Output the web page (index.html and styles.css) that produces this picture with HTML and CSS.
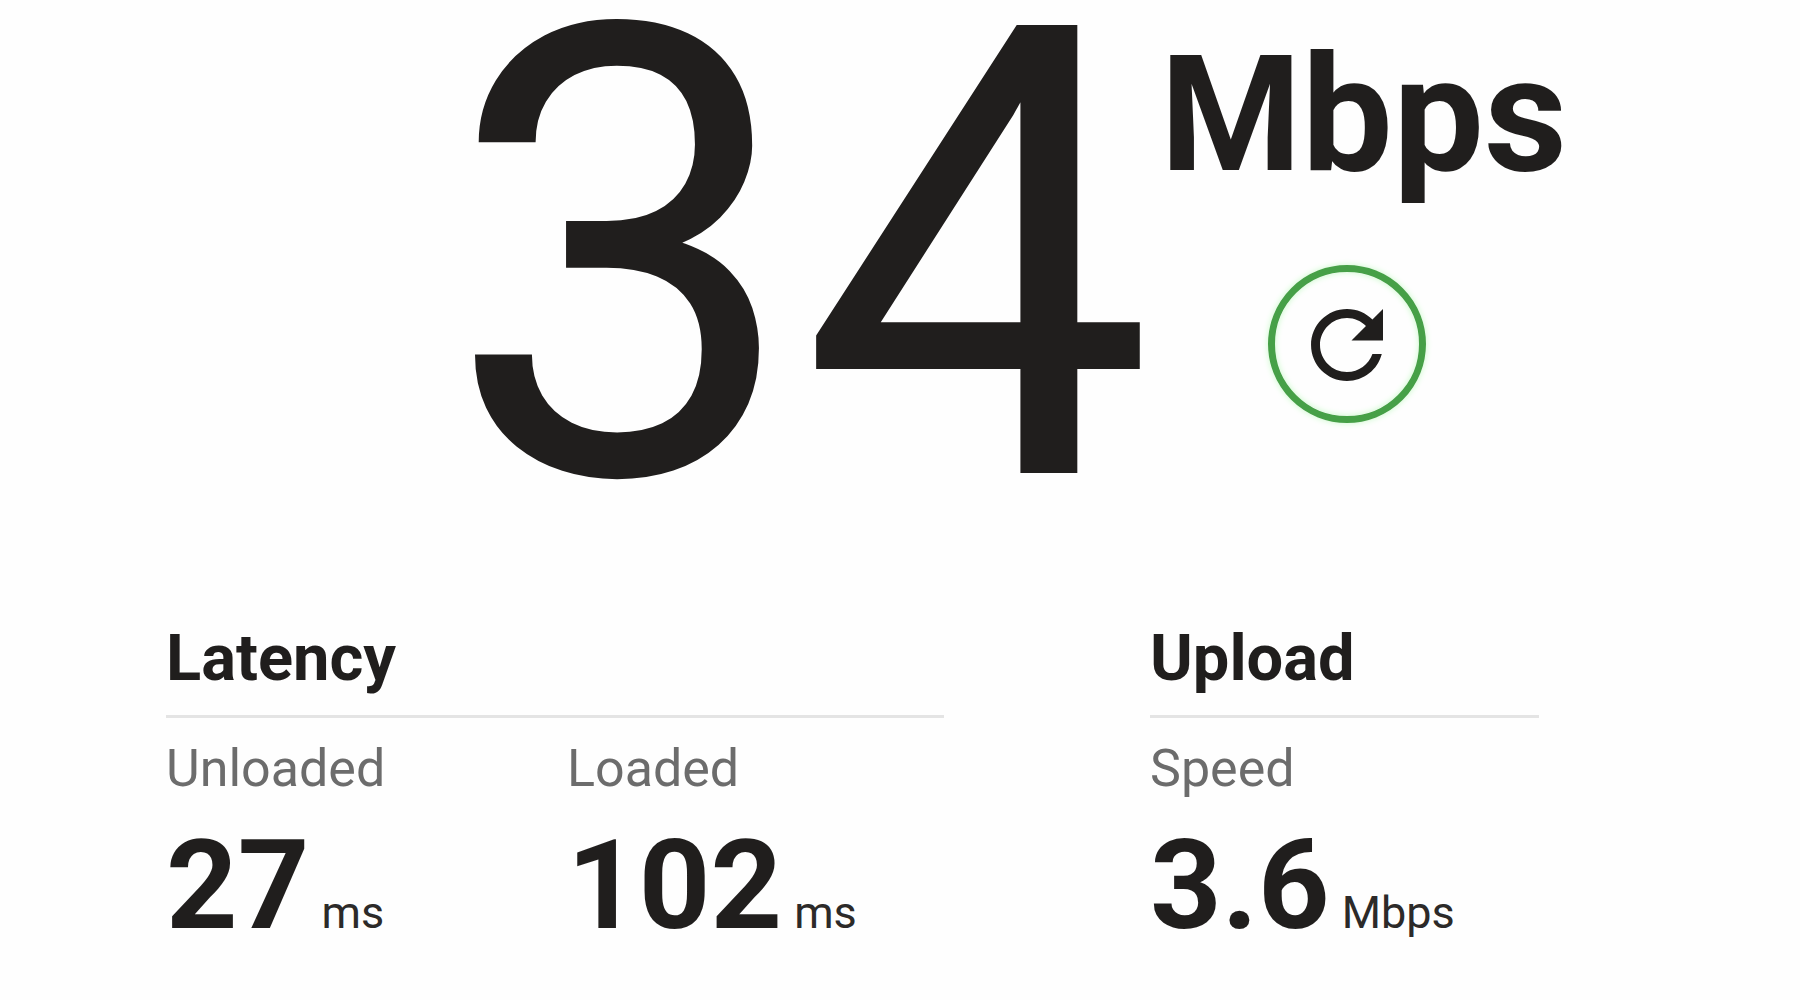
FILE: index.html
```html
<!DOCTYPE html>
<html lang="en">
<head>
    <meta charset="UTF-8">
    <meta name="viewport" content="width=device-width, initial-scale=1.0">
    <title>Internet speed test</title>
    <link rel="stylesheet" href="styles.css">
</head>

<body>
    <main class="speed-container">
        <!-- download speed -->
        <section class="speed-result">
            <div class="speed-value">34</div>
            <div class="speed-side">
                <div class="speed-units">Mbps</div>
                <button type="button" class="btn-refresh" aria-label="Test again">
                    <svg class="refresh-icon" viewBox="0 0 24 24" aria-hidden="true">
                        <path d="M17.65 6.35C16.2 4.9 14.21 4 12 4c-4.42 0-7.99 3.58-7.99 8s3.57 8 7.99 8c3.73 0 6.84-2.55 7.73-6h-2.08c-.82 2.33-3.04 4-5.65 4-3.31 0-6-2.69-6-6s2.69-6 6-6c1.66 0 3.14.69 4.22 1.78L13 11h7V4l-2.35 2.35z"/>
                    </svg>
                </button>
            </div>
        </section>

        <!-- latency and upload -->
        <div class="details">
            <section class="detail-group">
                <h2 class="detail-title">Latency</h2>
                <div class="detail-row">
                    <div class="detail-item">
                        <div class="detail-label">Unloaded</div>
                        <div class="detail-value">27 <span class="detail-units">ms</span></div>
                    </div>
                    <div class="detail-item">
                        <div class="detail-label">Loaded</div>
                        <div class="detail-value">102 <span class="detail-units">ms</span></div>
                    </div>
                </div>
            </section>
            <section class="detail-group">
                <h2 class="detail-title">Upload</h2>
                <div class="detail-item">
                    <div class="detail-label">Speed</div>
                    <div class="detail-value">3.6 <span class="detail-units">Mbps</span></div>
                </div>
            </section>
        </div>
    </main>
</body>
</html>
```
FILE: styles.css
```css
body {
    margin: 0;
    background-color: #fefefe;
    color: #201e1d;
    font-family: Roboto, "Liberation Sans", sans-serif;
}

/* download speed */
.speed-result {
    display: flex;
    justify-content: center;
    gap: 6px;
    padding-left: 213px;
}
.speed-value {
    font-size: 630px;
    line-height: 517px;
}
.speed-side {
    padding-top: 20px;
}
.speed-units {
    font-size: 162px;
    line-height: 191px;
    font-weight: bold;
}
.btn-refresh {
    display: flex;
    align-items: center;
    justify-content: center;
    width: 158px;
    height: 158px;
    margin: 54px 0 0 108px;
    padding: 0;
    border: 7px solid #46a047;
    border-radius: 50%;
    background: none;
    box-shadow: 0 0 6px #c8fac8, inset 0 0 6px #c8fac8;
    color: inherit;
    cursor: pointer;
}
.refresh-icon {
    flex: none;
    width: 108px;
    height: 108px;
    padding-top: 2px;
    fill: currentColor;
}

/* latency and upload */
.details {
    display: grid;
    grid-template-columns: 2fr 1fr;
    column-gap: 206px;
    padding: 103px 261px 40px 166px;
}
.detail-title {
    margin: 0 0 20px;
    padding-bottom: 18px;
    border-bottom: 3px solid #e4e4e4;
    font-size: 65px;
    line-height: 77px;
}
.detail-row {
    display: grid;
    grid-template-columns: 1fr 1fr;
    column-gap: 24px;
}
.detail-label {
    margin-bottom: 13px;
    color: #6c6c6c;
    font-size: 52px;
    line-height: 61px;
}
.detail-value {
    display: flex;
    align-items: baseline;
    gap: 12px;
    font-size: 125px;
    line-height: 148px;
    font-weight: bold;
}
.detail-units {
    color: #2c2a29;
    font-size: 45px;
    line-height: 53px;
    font-weight: normal;
}
```
